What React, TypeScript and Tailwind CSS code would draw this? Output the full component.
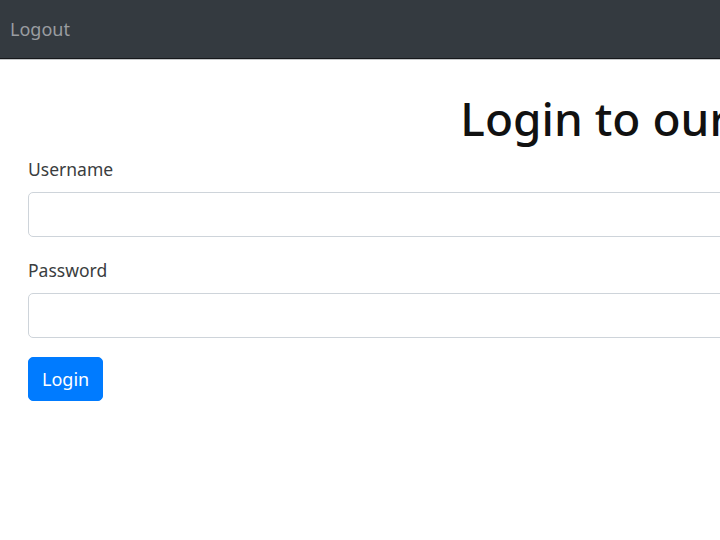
export default function App() {
  return (
    <div className="min-h-screen w-full overflow-hidden bg-white text-[#212529] font-['Noto_Sans',sans-serif]">
      <nav className="h-[58px] bg-[#343a40] flex items-center px-[10px]">
        <a href="#" className="text-[18px] text-[#9a9da0] hover:text-white">Logout</a>
      </nav>
      <div className="h-px bg-[#16181b]" />
      <div className="h-px bg-[#c6c8ca]" />

      <main className="w-[1372px] px-[28px] pt-[29px]">
        <h1 className="text-center text-[46px] leading-[58px] font-medium text-[#111] mb-[8px]">
          Login to our website
        </h1>
        <form className="flex flex-col">
          <div className="mb-[19px]">
            <label htmlFor="username" className="block text-[17.5px] leading-[28px] mb-[9px] text-[#3a3d40]">
              Username
            </label>
            <input
              id="username"
              type="text"
              className="block w-full h-[45px] px-[14px] rounded-[5px] border border-[#ced4da] outline-none"
            />
          </div>
          <div className="mb-[19px]">
            <label htmlFor="password" className="block text-[17.5px] leading-[28px] mb-[9px] text-[#3a3d40]">
              Password
            </label>
            <input
              id="password"
              type="password"
              className="block w-full h-[45px] px-[14px] rounded-[5px] border border-[#ced4da] outline-none"
            />
          </div>
          <div>
            <button type="submit" className="h-[44px] px-[13px] rounded-[5px] bg-[#007bff] text-white text-[18px] border border-[#007bff]">
              Login
            </button>
          </div>
        </form>
      </main>
    </div>
  );
}
